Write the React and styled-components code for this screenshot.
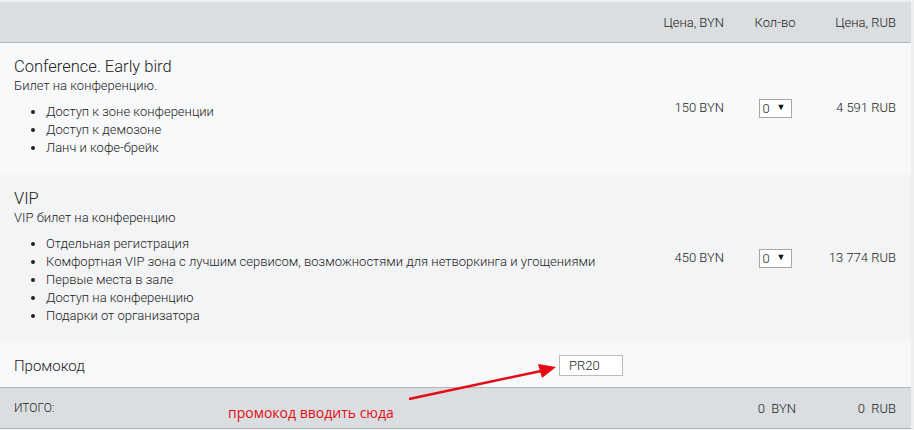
import styled, { createGlobalStyle } from "styled-components";

const GlobalStyle = createGlobalStyle`
  html, body {
    margin: 0;
    padding: 0;
    background: #eceef0;
  }
  body {
    font-family: Roboto, "Liberation Sans", sans-serif;
    font-weight: 300;
    color: #222;
    padding-top: 2px;
  }
`;

const Table = styled.div`
  position: relative;
  width: 911px;
  background: #f8f9fa;
`;

const Row = styled.div`
  display: grid;
  grid-template-columns: 1fr 120px 70px 86px;
  align-items: center;
  padding: 0 15px 0 14px;
  background: ${(p) => p.$bg || "#f8f9fa"};
`;

const HeadRow = styled(Row)`
  height: 40px;
  background: #dbdee0;
  border-bottom: 1px solid #b4b6b8;
  font-size: 13px;
`;

const TicketRow = styled(Row)`
  padding-top: 14px;
  padding-bottom: 18px;
`;

const Cell = styled.div`
  text-align: ${(p) => p.$align || "left"};
  padding-right: ${(p) => p.$pr || 0}px;
  font-size: ${(p) => p.$size || 13}px;
`;

const Desc = styled.div`
  display: flex;
  flex-direction: column;
`;

const Title = styled.div`
  font-size: 16.5px;
  line-height: 20px;
`;

const Subtitle = styled.div`
  font-size: 13px;
  line-height: 18px;
`;

const List = styled.ul`
  margin: 8px 0 0;
  padding-left: 32px;
  font-size: 13px;
  line-height: 18px;
`;

const SelectWrap = styled.div`
  position: relative;
  justify-self: center;
  width: 33px;
  height: 19px;
`;

const Select = styled.select`
  appearance: none;
  width: 100%;
  height: 100%;
  margin: 0;
  padding: 0 0 0 3px;
  border: 1px solid #a6a6a6;
  background: #fff;
  font-family: Roboto, "Liberation Sans", sans-serif;
  font-weight: 300;
  font-size: 13px;
  color: #222;
`;

const Caret = styled.span`
  position: absolute;
  right: 6px;
  top: 4px;
  font-size: 9px;
  color: #111;
  pointer-events: none;
`;

const PromoRow = styled.div`
  box-sizing: border-box;
  display: grid;
  grid-template-columns: 545px 64px;
  align-items: center;
  height: 45px;
  padding-left: 14px;
  border-bottom: 1px solid #b4b6b8;
  background: #f8f9fa;
`;

const PromoLabel = styled.div`
  font-size: 15px;
  padding-top: 1px;
`;

const PromoInput = styled.input`
  box-sizing: border-box;
  width: 64px;
  height: 21px;
  border: 1px solid #bbbbbb;
  background: #fff;
  padding: 0 0 0 9px;
  font-family: Roboto, "Liberation Sans", sans-serif;
  font-weight: 300;
  font-size: 13px;
  color: #222;
  outline: none;
`;

const TotalRow = styled(Row)`
  height: 40px;
  background: #dbdee0;
  border-bottom: 1px solid #b4b6b8;
  grid-template-columns: 1fr 70px 86px;
`;

const Note = styled.span`
  position: absolute;
  left: 228px;
  top: 401px;
  font-family: "Open Sans", "Liberation Sans", sans-serif;
  font-weight: 400;
  font-size: 14px;
  color: #e30c16;
  pointer-events: none;
`;

const Arrow = styled.svg`
  position: absolute;
  left: 0;
  top: 0;
  pointer-events: none;
`;

const tickets = [
  {
    title: "Conference. Early bird",
    subtitle: "Билет на конференцию.",
    items: ["Доступ к зоне конференции", "Доступ к демозоне", "Ланч и кофе-брейк"],
    byn: "150 BYN",
    rub: "4 591 RUB",
    bg: "#f8f9fa",
  },
  {
    title: "VIP",
    subtitle: "VIP билет на конференцию",
    items: [
      "Отдельная регистрация",
      "Комфортная VIP зона с лучшим сервисом, возможностями для нетворкинга и угощениями",
      "Первые места в зале",
      "Доступ на конференцию",
      "Подарки от организатора",
    ],
    byn: "450 BYN",
    rub: "13 774 RUB",
    bg: "#f3f4f6",
  },
];

export default function App() {
  return (
    <>
      <GlobalStyle />
      <Table>
        <HeadRow>
          <Cell />
          <Cell $align="right" $pr={16}>Цена, BYN</Cell>
          <Cell $align="center">Кол-во</Cell>
          <Cell $align="right">Цена, RUB</Cell>
        </HeadRow>
        {tickets.map((t) => (
          <TicketRow key={t.title} $bg={t.bg}>
            <Desc>
              <Title>{t.title}</Title>
              <Subtitle>{t.subtitle}</Subtitle>
              <List>
                {t.items.map((i) => (
                  <li key={i}>{i}</li>
                ))}
              </List>
            </Desc>
            <Cell $align="right" $pr={16}>{t.byn}</Cell>
            <SelectWrap>
              <Select defaultValue="0">
                <option value="0">0</option>
                <option value="1">1</option>
              </Select>
              <Caret>▼</Caret>
            </SelectWrap>
            <Cell $align="right">{t.rub}</Cell>
          </TicketRow>
        ))}
        <PromoRow>
          <PromoLabel>Промокод</PromoLabel>
          <PromoInput defaultValue="PR20" />
        </PromoRow>
        <TotalRow>
          <Cell $size={12}>ИТОГО:</Cell>
          <Cell $align="right" $pr={14}>0&nbsp;&nbsp;BYN</Cell>
          <Cell $align="right">0&nbsp;&nbsp;RUB</Cell>
        </TotalRow>
        <Note>промокод вводить сюда</Note>
        <Arrow width="911" height="430" viewBox="0 0 911 430">
          <line x1="409" y1="397" x2="541" y2="369" stroke="#e30c16" strokeWidth="2.5" />
          <polygon points="556,365 538,362 542,376" fill="#e30c16" />
        </Arrow>
      </Table>
    </>
  );
}
